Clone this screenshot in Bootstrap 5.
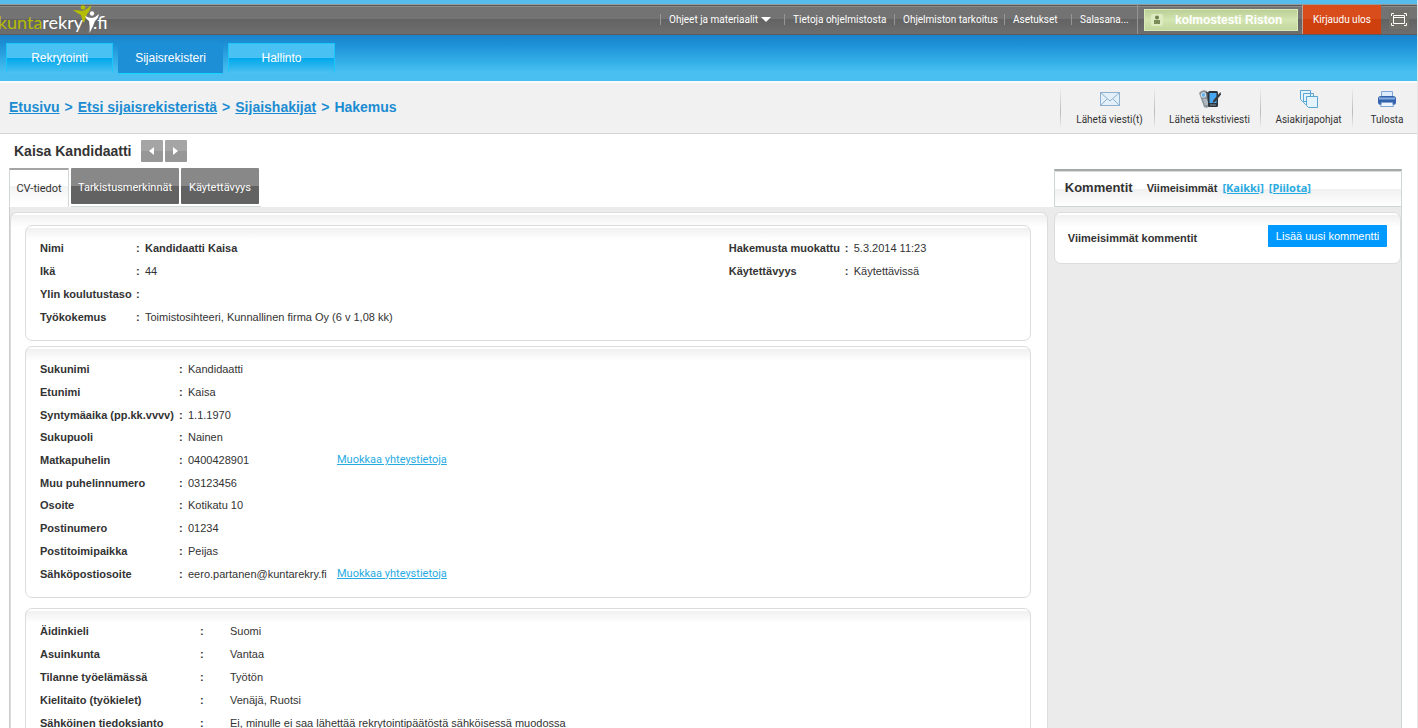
<!DOCTYPE html>
<html lang="fi">
<head>
<meta charset="utf-8">
<meta name="viewport" content="width=device-width, initial-scale=1">
<title>Kuntarekry.fi – Hakemus</title>
<link href="https://cdn.jsdelivr.net/npm/bootstrap@5.3.0/dist/css/bootstrap.min.css" rel="stylesheet">
<style>
  :root { --humanist: "Noto Sans", "DejaVu Sans Condensed", sans-serif; --narrow: Roboto, "Noto Sans", sans-serif; }
  body { font: 11px/16px "Liberation Sans", Arial, sans-serif; color: #333; background: #fff; border-right: 1px solid #e6e6e6; }
  button { font: inherit; border: 0; padding: 0; }
  .ui-text { font-family: var(--narrow); font-size: 10px; }

  /* top bar */
  .top-strip { height: 4px; background: #55bcec; }
  .top-bar { height: 31px; border-top: 1px solid #999; box-shadow: inset 0 1px #5a5a5a, inset 0 2px #8a8a8a; border-bottom: 1px solid #5a5a5a;
    background: linear-gradient(#737373 0, #737373 50%, #636363 50%, #6e6e6e 100%); color: #fff; }
  .brand { position: relative; width: 120px; color: #fff; font: 18px/34px Lato, sans-serif; overflow: hidden; }
  .brand-word { width: 83px; overflow: hidden; margin-right: 10px; }
  .brand-word b { font-weight: 400; color: #b4bd00; }
  .brand svg { position: absolute; left: 72px; top: 0; }
  .top-link { color: #fff; text-decoration: none; line-height: 11px; border-left: 1px solid #949494; padding-left: 8px; white-space: nowrap; }
  .w-a { width: 124px; } .w-b { width: 110px; } .w-c { width: 67px; } .w-d { width: 66px; }
  .user-cell { border-left: 1px solid #949494; padding: 0 4px 0 6px; }
  .user-box { width: 154px; height: 22px; border: 1px solid #d9eab8; background: linear-gradient(#bccf97, #d3e5b1 50%, #c2d69d); font-weight: 700; font-size: 12px; padding-left: 6px; gap: 12px; }
  .logout { width: 79px; background: linear-gradient(#d94d1d 50%, #cf400f 50%); color: #fff; border-left: 1px solid #b5a59d; }
  .full-btn { background: #706f68; width: 20px; height: 19px; }

  /* main navigation */
  .main-nav { height: 46px; background: linear-gradient(#1b82ca 0, #1c90d6 20%, #35b0e8 60%, #48bff0 80%); padding: 8px 6px 0; gap: 5px; font-size: 12px; }
  .nav-tile { width: 107px; height: 30px; line-height: 29px; color: #fff; text-decoration: none; text-align: center; border: 1px solid #1cc6fb; border-bottom-color: transparent;
    background: linear-gradient(#49c1f2 50%, #00a8ec 50%, #22b3ee 75%, #48bff0); }
  .nav-tile.current { background: #1c8fd6; border-color: #1c8fd6 #1c8fd6 #10d8ff; border-radius: 2px; width: 105px; height: 31px; }

  /* breadcrumb band */
  .crumb-band { height: 53px; background: #f1f1f1; border-top: 2px solid #fafafa; border-bottom: 1px solid #d2d6d5; }
  .crumbs { font-size: 14px; font-weight: 700; color: #1b8cd2; padding: 0 0 2px 9px; gap: 5px; }
  .crumbs a { color: inherit; }
  .tool { text-decoration: none; color: #333; height: 38px; border-left: 1px solid; border-image: linear-gradient(#eee, #bbb 60%, #eee) 1; line-height: 14px; gap: 4px; padding-left: 4px; }
  .t-a { width: 94px; } .t-b { width: 106px; } .t-c { width: 92px; } .t-d { width: 65px; }

  /* page body */
  .page { padding: 0 15px 0 9px; }
  .person { height: 34px; padding-left: 5px; gap: 2px; }
  .person h1 { font-size: 14px; font-weight: 700; line-height: 16px; margin: 0 8px 0 0; }
  .step { width: 22px; height: 22px; border-radius: 1px; background: linear-gradient(#a5a5a5 50%, #979797 50%); }
  .tabs { height: 39px; gap: 2px; font-family: var(--narrow); }
  .tabs a { text-decoration: none; color: #fff; height: 36px; padding-top: 3px; background: linear-gradient(#888 50%, #626262 50%); border-radius: 1px; }
  .tabs a.on { width: 60px; height: 39px; padding: 0; color: #333; border: solid #d2d8d6; border-width: 2px 1px 0; border-top-color: #a5a5a5; background: linear-gradient(#fff 42%, #f2f2f2 42%, #fff 90%); }
  .tab-group { gap: 2px; border-bottom: 1px solid #d2d8d6; padding-right: 2px; }
  .tab-t { width: 108px; } .tab-k { width: 78px; }
  .grey-area { background: #ebebeb; }
  .soft-box { background: linear-gradient(#f0f0f0, #fff 12px) no-repeat 0 2px #fff; border: 1px solid #dcdcdc; border-radius: 7px; }
  .left-area { border-left: 1px solid #ccc; padding: 5px 6px 0 0; }
  .outer { padding: 12px 16px 0 14px; border-bottom: 0; border-radius: 7px 7px 0 0; }
  .data-card { padding: 11px 14px 12px; margin-bottom: 5px; }
  .data-card.wide-gap { margin-bottom: 10px; }
  .data-card table { border-collapse: collapse; }
  .data-card th, .data-card td { padding: 0; line-height: 16px; white-space: nowrap; vertical-align: middle; }
  .side-info { width: 287px; }
  .c9 { width: 9px; }
  .l1 { width: 96px; } .l1r { width: 116px; } .l2 { width: 139px; } .v2 { width: 149px; } .l3 { width: 160px; } .c3 { width: 30px; }
  .h4r { height: 91px; } .h2r { height: 45px; } .h10r { height: 227px; } .h5r { height: 114px; }
  .edit-link, .comment-head a { color: #29abe2; }
  .link-cell { font-family: var(--narrow); font-size: 11px; }

  /* comments */
  .comment-head { height: 38px; margin-top: 1px; border: solid #d0d6d4; border-width: 2px 1px 1px; border-top-color: #a3aaa8; box-shadow: inset 0 1px #d8dcdb; padding: 0 0 2px 10px;
    background: linear-gradient(#fff 50%, #f0f0f0 50%, #fff); font-weight: 700; }
  .comment-head h2 { font-size: 13px; font-weight: 700; line-height: 16px; margin: 0 14px 0 0; }
  .comment-head a { font-family: var(--humanist); margin-left: 5px; }
  .right-area { border-right: 1px solid #d0d6d4; padding-top: 5px; }
  .comment-box { height: 52px; padding: 12px 13px 0 13px; }
  .comment-box strong { line-height: 26px; }
  .add-btn { width: 119px; height: 22px; background: #09f; color: #fff; border-radius: 1px; }
</style>
</head>
<body class="vh-100 overflow-hidden d-flex flex-column">
<div class="top-strip flex-shrink-0"></div>
<header class="top-bar d-flex justify-content-between flex-shrink-0">
  <a href="#" class="brand d-flex text-decoration-none">
    <span class="brand-word d-flex justify-content-end"><b>kunta</b><span>rekry</span></span><span>.fi</span>
    <svg width="28" height="30" viewBox="0 0 28 30">
      <circle cx="11" cy="2.500" r="2.300" fill="#b4bd00"/>
      <path d="M1 5Q7 5 10 6Q15 5 19 0Q19 5 15 9L14 12Q13 15 12 18Q10 15 9 10Q5 8 1 5Z" fill="#b4bd00"/>
      <circle cx="20" cy="8.500" r="2.200" fill="#fff"/>
      <path d="M13 11Q17 13 20 13Q24 12 27 9Q26 14 23 16Q21 22 17.500 28Q18 21 17 16Q14 14 13 11Z" fill="#fff"/>
    </svg>
  </a>
  <div class="d-flex">
    <nav class="d-flex align-items-center ui-text">
      <a href="#" class="top-link w-a">Ohjeet ja materiaalit <svg width="10" height="6" viewBox="0 0 10 6"><path d="M0 0h10L5 5z" fill="#fff"/></svg></a>
      <a href="#" class="top-link w-b">Tietoja ohjelmistosta</a>
      <a href="#" class="top-link w-b">Ohjelmiston tarkoitus</a>
      <a href="#" class="top-link w-c">Asetukset</a>
      <a href="#" class="top-link w-d">Salasana...</a>
    </nav>
    <div class="user-cell d-flex align-items-center">
      <div class="user-box d-flex align-items-center">
        <svg width="12" height="12" viewBox="0 0 12 12"><rect width="12" height="12" rx="2" fill="#dcebc0"/><circle cx="6" cy="3.500" r="2" fill="#6d7f4c"/><path d="M3 10V6h6v4z" fill="#7b8d59"/></svg>
        <span>kolmostesti Riston</span>
      </div>
    </div>
    <button class="logout ui-text" type="button">Kirjaudu ulos</button>
    <div class="d-flex align-items-center px-1 me-1 ms-1">
      <button class="full-btn d-flex align-items-center justify-content-center" type="button" aria-label="Koko näyttö">
        <svg width="16" height="13" viewBox="0 0 16 13" fill="none" stroke="#fff"><path d="M3 .5H.5V3M13 .5h2.500V3M.5 10v2.500H3M15.500 10v2.500H13M2.500 2.500h11v8h-11zM2.500 4.500h11"/></svg>
      </button>
    </div>
  </div>
</header>
<nav class="main-nav d-flex flex-shrink-0">
  <a href="#" class="nav-tile">Rekrytointi</a>
  <a href="#" class="nav-tile current">Sijaisrekisteri</a>
  <a href="#" class="nav-tile">Hallinto</a>
</nav>
<div class="crumb-band d-flex justify-content-between align-items-center flex-shrink-0">
  <nav class="crumbs d-flex">
    <a href="#">Etusivu</a><span>&gt;</span><a href="#">Etsi sijaisrekisteristä</a><span>&gt;</span><a href="#">Sijaishakijat</a><span>&gt;</span><span>Hakemus</span>
  </nav>
  <div class="d-flex ui-text">
    <a href="#" class="tool t-a d-flex flex-column align-items-center">
      <svg width="20" height="20" viewBox="0 0 20 20"><rect x=".5" y="3.500" width="19" height="13" fill="#e3f0fa" stroke="#8fb0cf"/><path d="M1 4l9 8 9-8M1 16l6-6M19 16l-6-6" fill="none" stroke="#8fb0cf"/></svg>
      <span>Lähetä viesti(t)</span></a>
    <a href="#" class="tool t-b d-flex flex-column align-items-center">
      <svg width="22" height="20" viewBox="0 0 22 20"><path d="M0 4q3-4 8-2l3 15q-3 3-6 1z" fill="#8b939c"/><path d="M7 3l2 0 3 13-2 2z" fill="#4a525a"/><circle cx="4.500" cy="6" r="2.300" fill="#5fb4f0" stroke="#dfe6ec"/><path d="M4 11h4M5 13h4M5.500 15h4" stroke="#d5dbe1"/><rect x="9" y="2" width="10" height="16" rx="1.500" fill="#2c343d"/><rect x="10.500" y="4" width="7" height="10" fill="#4aa8f2"/><path d="M21.500 3l-7 8-1 3 3-1.500 5.500-7z" fill="#3a3a3a"/><path d="M11 16h6" stroke="#8a949e"/></svg>
      <span>Lähetä tekstiviesti</span></a>
    <a href="#" class="tool t-c d-flex flex-column align-items-center">
      <svg width="20" height="20" viewBox="0 0 20 20" fill="#e4f3fc" stroke="#5ba5d3"><path d="M1.500 1.500h10v11h-8l-2-2zM4.500 4.500h10v11h-8l-2-2z"/><path d="M7.500 7.500h11v11h-9l-2-2z"/></svg>
      <span>Asiakirjapohjat</span></a>
    <a href="#" class="tool t-d d-flex flex-column align-items-center">
      <svg width="20" height="20" viewBox="0 0 20 20"><path d="M4.500 2.500h11V9h-11z" fill="#dcecfa" stroke="#7fa5d6"/><rect x="1" y="7" width="18" height="9" rx="3" fill="#3562ac"/><path d="M2 9.500h16" stroke="#86aee2" stroke-width="2"/><path d="M4.500 13.500h11l1 4h-13z" fill="#eef5fc" stroke="#7fa5d6"/></svg>
      <span>Tulosta</span></a>
  </div>
</div>
<main class="page d-flex flex-column flex-grow-1">
  <div class="person d-flex align-items-center flex-shrink-0">
    <h1>Kaisa Kandidaatti</h1>
    <button type="button" class="step d-flex align-items-center justify-content-center" aria-label="Edellinen"><svg width="6" height="8" viewBox="0 0 6 8"><path d="M5 0v8L0 4z" fill="#fff"/></svg></button>
    <button type="button" class="step d-flex align-items-center justify-content-center" aria-label="Seuraava"><svg width="6" height="8" viewBox="0 0 6 8"><path d="M0 0v8l5-4z" fill="#fff"/></svg></button>
  </div>
  <div class="row g-0 flex-grow-1">
    <div class="col-9 d-flex flex-column">
      <nav class="tabs d-flex flex-shrink-0">
        <a href="#" class="on d-flex align-items-center justify-content-center">CV-tiedot</a>
        <div class="tab-group d-flex">
          <a href="#" class="tab-t d-flex align-items-center justify-content-center">Tarkistusmerkinnät</a>
          <a href="#" class="tab-k d-flex align-items-center justify-content-center">Käytettävyys</a>
        </div>
      </nav>
      <div class="grey-area left-area flex-grow-1">
        <div class="soft-box outer h-100">
          <section class="soft-box data-card d-flex justify-content-between">
            <table class="h4r">
              <tr><th class="l1">Nimi</th><th class="c9">:</th><td><b>Kandidaatti Kaisa</b></td></tr>
              <tr><th>Ikä</th><th>:</th><td>44</td></tr>
              <tr><th>Ylin koulutustaso</th><th>:</th><td></td></tr>
              <tr><th>Työkokemus</th><th>:</th><td>Toimistosihteeri, Kunnallinen firma Oy (6 v 1,08 kk)</td></tr>
            </table>
            <div class="side-info">
              <table class="h2r">
                <tr><th class="l1r">Hakemusta muokattu</th><th class="c9">:</th><td>5.3.2014 11:23</td></tr>
                <tr><th>Käytettävyys</th><th>:</th><td>Käytettävissä</td></tr>
              </table>
            </div>
          </section>
          <section class="soft-box data-card wide-gap">
            <table class="h10r">
              <tr><th class="l2">Sukunimi</th><th class="c9">:</th><td class="v2">Kandidaatti</td><td></td></tr>
              <tr><th>Etunimi</th><th>:</th><td>Kaisa</td><td></td></tr>
              <tr><th>Syntymäaika (pp.kk.vvvv)</th><th>:</th><td>1.1.1970</td><td></td></tr>
              <tr><th>Sukupuoli</th><th>:</th><td>Nainen</td><td></td></tr>
              <tr><th>Matkapuhelin</th><th>:</th><td>0400428901</td><td class="link-cell"><a href="#" class="edit-link">Muokkaa yhteystietoja</a></td></tr>
              <tr><th>Muu puhelinnumero</th><th>:</th><td>03123456</td><td></td></tr>
              <tr><th>Osoite</th><th>:</th><td>Kotikatu 10</td><td></td></tr>
              <tr><th>Postinumero</th><th>:</th><td>01234</td><td></td></tr>
              <tr><th>Postitoimipaikka</th><th>:</th><td>Peijas</td><td></td></tr>
              <tr><th>Sähköpostiosoite</th><th>:</th><td>eero.partanen@kuntarekry.fi</td><td class="link-cell"><a href="#" class="edit-link">Muokkaa yhteystietoja</a></td></tr>
            </table>
          </section>
          <section class="soft-box data-card">
            <table class="h5r">
              <tr><th class="l3">Äidinkieli</th><th class="c3">:</th><td>Suomi</td></tr>
              <tr><th>Asuinkunta</th><th>:</th><td>Vantaa</td></tr>
              <tr><th>Tilanne työelämässä</th><th>:</th><td>Työtön</td></tr>
              <tr><th>Kielitaito (työkielet)</th><th>:</th><td>Venäjä, Ruotsi</td></tr>
              <tr><th>Sähköinen tiedoksianto</th><th>:</th><td>Ei, minulle ei saa lähettää rekrytointipäätöstä sähköisessä muodossa</td></tr>
            </table>
          </section>
        </div>
      </div>
    </div>
    <aside class="col-3 d-flex flex-column">
      <div class="comment-head d-flex align-items-center flex-shrink-0">
        <h2>Kommentit</h2><span>Viimeisimmät</span><a href="#">[Kaikki]</a><a href="#">[Piilota]</a>
      </div>
      <div class="grey-area right-area flex-grow-1">
        <div class="soft-box comment-box d-flex justify-content-between align-items-start">
          <strong>Viimeisimmät kommentit</strong>
          <button type="button" class="add-btn">Lisää uusi kommentti</button>
        </div>
      </div>
    </aside>
  </div>
</main>
<script src="https://cdn.jsdelivr.net/npm/bootstrap@5.3.0/dist/js/bootstrap.bundle.min.js"></script>
</body>
</html>
